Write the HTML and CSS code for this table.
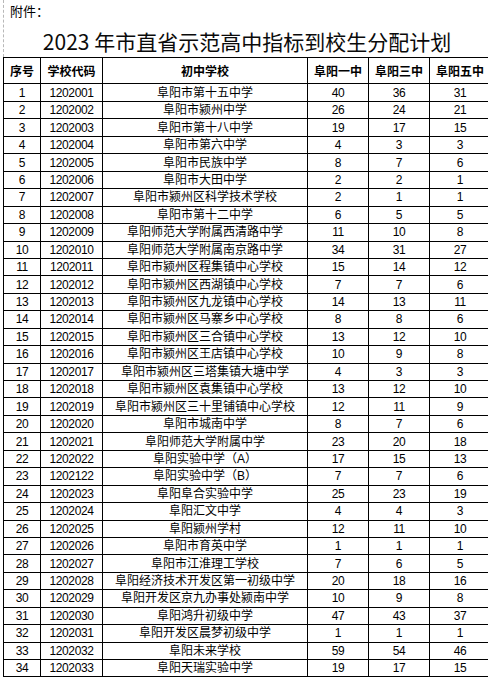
FILE: index.html
```html
<!DOCTYPE html>
<html lang="zh-CN">
<head>
<meta charset="utf-8">
<title>2023年市直省示范高中指标到校生分配计划</title>
<link rel="stylesheet" href="styles.css">
</head>
<body>
<div class="page">
  <div class="head">
    <p class="attach">附件：</p>
    <h1 class="title">2023 年市直省示范高中指标到校生分配计划</h1>
  </div>
  <table class="plan">
    <colgroup>
      <col class="c-no"><col class="c-code"><col class="c-name"><col class="c-num"><col class="c-num"><col class="c-num">
    </colgroup>
    <thead>
      <tr><th>序号</th><th>学校代码</th><th>初中学校</th><th>阜阳一中</th><th>阜阳三中</th><th>阜阳五中</th></tr>
    </thead>
    <tbody>
      <tr class="first"><td>1</td><td>1202001</td><td>阜阳市第十五中学</td><td>40</td><td>36</td><td>31</td></tr>
      <tr><td>2</td><td>1202002</td><td>阜阳市颍州中学</td><td>26</td><td>24</td><td>21</td></tr>
      <tr><td>3</td><td>1202003</td><td>阜阳市第十八中学</td><td>19</td><td>17</td><td>15</td></tr>
      <tr><td>4</td><td>1202004</td><td>阜阳市第六中学</td><td>4</td><td>3</td><td>3</td></tr>
      <tr><td>5</td><td>1202005</td><td>阜阳市民族中学</td><td>8</td><td>7</td><td>6</td></tr>
      <tr><td>6</td><td>1202006</td><td>阜阳市大田中学</td><td>2</td><td>2</td><td>1</td></tr>
      <tr><td>7</td><td>1202007</td><td>阜阳市颍州区科学技术学校</td><td>2</td><td>1</td><td>1</td></tr>
      <tr><td>8</td><td>1202008</td><td>阜阳市第十二中学</td><td>6</td><td>5</td><td>5</td></tr>
      <tr><td>9</td><td>1202009</td><td>阜阳师范大学附属西清路中学</td><td>11</td><td>10</td><td>8</td></tr>
      <tr><td>10</td><td>1202010</td><td>阜阳师范大学附属南京路中学</td><td>34</td><td>31</td><td>27</td></tr>
      <tr><td>11</td><td>1202011</td><td>阜阳市颍州区程集镇中心学校</td><td>15</td><td>14</td><td>12</td></tr>
      <tr><td>12</td><td>1202012</td><td>阜阳市颍州区西湖镇中心学校</td><td>7</td><td>7</td><td>6</td></tr>
      <tr><td>13</td><td>1202013</td><td>阜阳市颍州区九龙镇中心学校</td><td>14</td><td>13</td><td>11</td></tr>
      <tr><td>14</td><td>1202014</td><td>阜阳市颍州区马寨乡中心学校</td><td>8</td><td>8</td><td>6</td></tr>
      <tr><td>15</td><td>1202015</td><td>阜阳市颍州区三合镇中心学校</td><td>13</td><td>12</td><td>10</td></tr>
      <tr><td>16</td><td>1202016</td><td>阜阳市颍州区王店镇中心学校</td><td>10</td><td>9</td><td>8</td></tr>
      <tr><td>17</td><td>1202017</td><td>阜阳市颍州区三塔集镇大塘中学</td><td>4</td><td>3</td><td>3</td></tr>
      <tr><td>18</td><td>1202018</td><td>阜阳市颍州区袁集镇中心学校</td><td>13</td><td>12</td><td>10</td></tr>
      <tr><td>19</td><td>1202019</td><td>阜阳市颍州区三十里铺镇中心学校</td><td>12</td><td>11</td><td>9</td></tr>
      <tr><td>20</td><td>1202020</td><td>阜阳市城南中学</td><td>8</td><td>7</td><td>6</td></tr>
      <tr><td>21</td><td>1202021</td><td>阜阳师范大学附属中学</td><td>23</td><td>20</td><td>18</td></tr>
      <tr><td>22</td><td>1202022</td><td>阜阳实验中学（A）</td><td>17</td><td>15</td><td>13</td></tr>
      <tr><td>23</td><td>1202122</td><td>阜阳实验中学（B）</td><td>7</td><td>7</td><td>6</td></tr>
      <tr><td>24</td><td>1202023</td><td>阜阳阜合实验中学</td><td>25</td><td>23</td><td>19</td></tr>
      <tr><td>25</td><td>1202024</td><td>阜阳汇文中学</td><td>4</td><td>4</td><td>3</td></tr>
      <tr><td>26</td><td>1202025</td><td>阜阳颍州学村</td><td>12</td><td>11</td><td>10</td></tr>
      <tr><td>27</td><td>1202026</td><td>阜阳市育英中学</td><td>1</td><td>1</td><td>1</td></tr>
      <tr><td>28</td><td>1202027</td><td>阜阳市江淮理工学校</td><td>7</td><td>6</td><td>5</td></tr>
      <tr><td>29</td><td>1202028</td><td>阜阳经济技术开发区第一初级中学</td><td>20</td><td>18</td><td>16</td></tr>
      <tr><td>30</td><td>1202029</td><td>阜阳开发区京九办事处颍南中学</td><td>10</td><td>9</td><td>8</td></tr>
      <tr><td>31</td><td>1202030</td><td>阜阳鸿升初级中学</td><td>47</td><td>43</td><td>37</td></tr>
      <tr><td>32</td><td>1202031</td><td>阜阳开发区晨梦初级中学</td><td>1</td><td>1</td><td>1</td></tr>
      <tr><td>33</td><td>1202032</td><td>阜阳未来学校</td><td>59</td><td>54</td><td>46</td></tr>
      <tr><td>34</td><td>1202033</td><td>阜阳天瑞实验中学</td><td>19</td><td>17</td><td>15</td></tr>
    </tbody>
  </table>
</div>
</body>
</html>
```

FILE: styles.css
```css
html, body {
  margin: 0;
  padding: 0;
  background: #fff;
  overflow: hidden;
}

body {
  font-family: "Liberation Sans", "Noto Sans CJK SC", sans-serif;
  color: #000;
}

.page {
  padding-left: 3px;
  width: 492px;
}

.head {
  height: 57px;
  width: 487px;
  border-left: 1px dashed #b8b8b8;
  box-sizing: border-box;
  display: flex;
  flex-direction: column;
}

.attach {
  margin: 0;
  padding: 3px 0 0 6px;
  font-family: "Noto Sans CJK SC", sans-serif;
  font-size: 13px;
  line-height: 16px;
}

.title {
  margin: 9px 0 0;
  font-family: "Noto Sans CJK SC", sans-serif;
  font-weight: normal;
  font-size: 21px;
  line-height: 26px;
  text-align: center;
  color: #0a0a0a;
}

.plan {
  border-collapse: collapse;
  table-layout: fixed;
  width: 488px;
  font-size: 12px;
}

.c-no { width: 37px; }
.c-code { width: 62px; }
.c-name { width: 205px; }
.c-num { width: 61px; }

.plan th,
.plan td {
  border: 1px solid #000;
  padding: 0;
  text-align: center;
  vertical-align: middle;
  white-space: nowrap;
  overflow: hidden;
  line-height: 14px;
}

.plan th {
  height: 25px;
  font-family: "Noto Sans CJK SC", sans-serif;
  font-weight: bold;
  font-size: 12px;
}

.plan td {
  height: 16.45px;
  letter-spacing: -0.4px;
}

.plan td:nth-child(3) {
  letter-spacing: 0;
}

.plan tr.first td {
  height: 17px;
}
```
